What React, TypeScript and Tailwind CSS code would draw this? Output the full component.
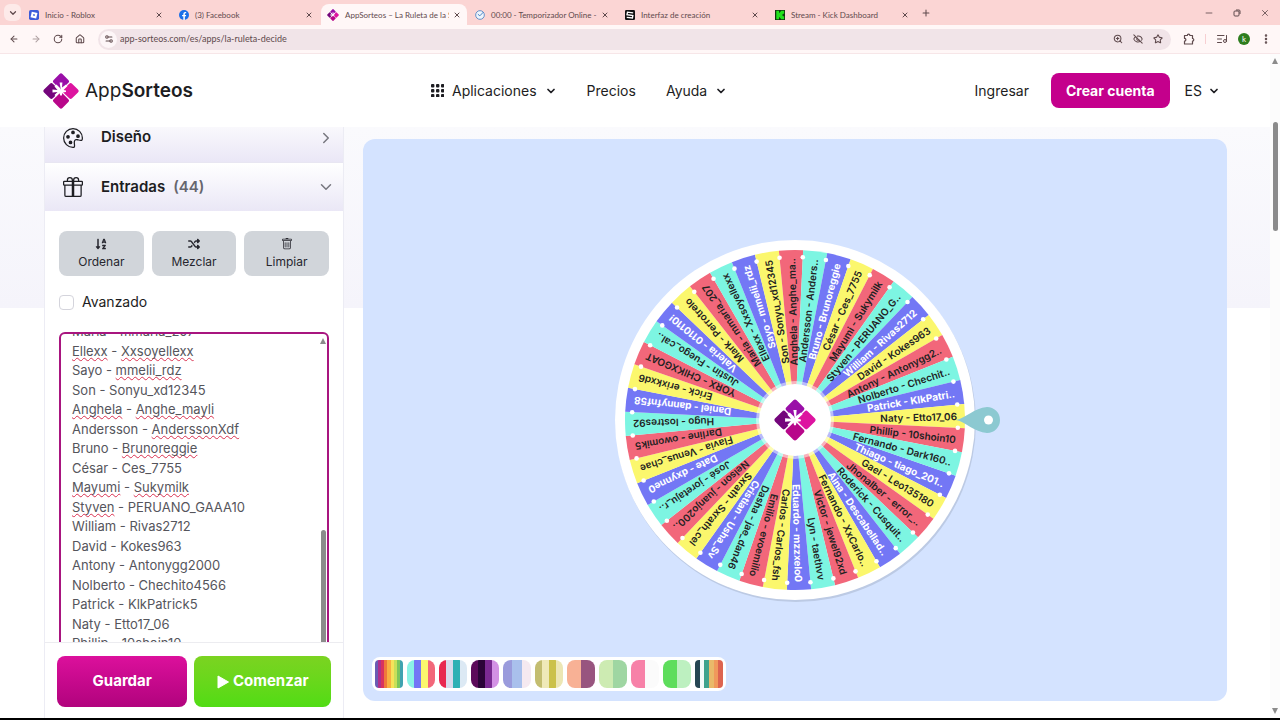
import { useEffect, useRef } from "react";
import {
  ArrowLeft,
  ArrowRight,
  ChevronDown,
  ChevronRight,
  EllipsisVertical,
  EyeOff,
  House,
  ListMusic,
  Minus,
  Plus,
  RotateCw,
  Settings2,
  Star,
  X,
  ZoomIn,
} from "lucide-react";
import { BsGift, BsPalette, BsTrash } from "react-icons/bs";
import { FaPlay, FaSortAlphaDown } from "react-icons/fa";
import { FaShuffle } from "react-icons/fa6";

const entries = [
  "Thiago - tiago_201..",
  "Gael - Leo135180",
  "Jhonalber - error_..",
  "Roderick - Cusquit..",
  "Aina - Descabellad..",
  "Fernando - XxCarlo..",
  "Victor - jewel92xd",
  "Lyn - taethvv",
  "Eduardo - mzzxelo0",
  "Carlos - Carlos_fsh",
  "Emilio - evoemilio",
  "Dasha - jae_dan46",
  "Cristian - Usha_Sv",
  "Sxrath - Sxrath_cel",
  "Nelson - juanjo200..",
  "José - joretaju_r..",
  "Date - dxynne0",
  "Flavia - Venus_chae",
  "Darline - owomik5",
  "Hugo - lostres92",
  "Daniel - dannyfnf58",
  "Erick - erixkxd6",
  "YORX - CHIKXGOAT",
  "Justin - Fuego_cal..",
  "Valeria - 0110110!",
  "Mark - Perrotrelo",
  "Maria - mmaria_207",
  "Ellexx - Xxsoyellexx",
  "Sayo - mmelii_rdz",
  "Son - Sonyu_xd12345",
  "Anghela - Anghe_mayli",
  "Andersson - AnderssonXdf",
  "Bruno - Brunoreggie",
  "César - Ces_7755",
  "Mayumi - Sukymilk",
  "Styven - PERUANO_GAAA10",
  "William - Rivas2712",
  "David - Kokes963",
  "Antony - Antonygg2000",
  "Nolberto - Chechito4566",
  "Patrick - KlkPatrick5",
  "Naty - Etto17_06",
  "Phillip - 10shoin10",
  "Fernando - Dark160..",
];

const misspelled = [
  "Ellexx",
  "Xxsoyellexx",
  "mmelii_rdz",
  "Anghela",
  "Anghe_mayli",
  "AnderssonXdf",
  "Brunoreggie",
  "Mayumi",
  "Sukymilk",
  "Styven",
];

const wheelColors = ["#7377f5", "#fbf76d", "#f2677a", "#7df5e2"];

const palettes = [
  ["#6a5cb4", "#b0308c", "#d8335f", "#f0783c", "#f8b042", "#f6e35a", "#c8e05a", "#7cc75c", "#3fa3b0"],
  ["#8af3e6", "#7377f5", "#fbf76d", "#f2677a"],
  ["#e8274f", "#d8d9ec", "#2eb0b4", "#dce9f4"],
  ["#5c0a5a", "#2b0438", "#7b2a93", "#d391e4"],
  ["#9a9bdc", "#a9c0ec", "#f5e9f0"],
  ["#c3bd70", "#efe9b8", "#cbc14a", "#ece6b4"],
  ["#f8b195", "#98557f"],
  ["#cdebb2", "#9fd6a2"],
  ["#f781a8", "#fbfbfb"],
  ["#5edd5c", "#bdf0c0"],
  ["#264653", "#f4fbfa", "#3fa38d", "#e9b96a", "#f0995c", "#dd6450"],
];

function Logo({ className }: { className?: string }) {
  return (
    <svg viewBox="0 0 36 36" className={className} aria-hidden="true">
      <g transform="rotate(45 18 18)">
        <rect x="5" y="5" width="12.4" height="12.4" rx="2" fill="#9a0fa8" />
        <rect x="18.600" y="5" width="12.4" height="12.4" rx="2" fill="#dd14a0" />
        <rect x="18.600" y="18.600" width="12.4" height="12.4" rx="2" fill="#b8078a" />
        <rect x="5" y="18.600" width="12.4" height="12.4" rx="2" fill="#74067c" />
      </g>
      <path
        d="M18 18L16.600 9.500H19.400L19 14.500L23 11.500L24.500 13L20.500 17L23 17.500V19L19.500 19.500L18.800 22.500H17.200L16.500 20L13 23.500L11.500 22L14.500 19L9.500 19.400V16.600L14.500 17L11.500 13.500L13.500 11.500L17 15Z"
        fill="#fff"
      />
    </svg>
  );
}

function RobloxIcon() {
  return (
    <svg viewBox="0 0 12 12" className="size-2.5 shrink-0">
      <rect width="12" height="12" rx="2" fill="#3b5bd9" />
      <path d="M3.4 2l6.8 1.6-1.6 6.6-6.8-1.6z" fill="#fff" />
      <path d="M5.3 4.8l1.9.5-.5 1.9-1.9-.5z" fill="#3b5bd9" />
    </svg>
  );
}

function FacebookIcon() {
  return (
    <svg viewBox="0 0 12 12" className="size-2.5 shrink-0">
      <circle cx="6" cy="6" r="6" fill="#1a6fe8" />
      <path d="M5.2 12V7.6H3.7V5.9h1.5V4.7c0-1.6.9-2.4 2.3-2.4l1.1.1v1.5h-.7c-.7 0-.9.4-.9.9v1.1h1.6l-.3 1.7H7V12z" fill="#fff" />
    </svg>
  );
}

function TimerIcon() {
  return (
    <svg viewBox="0 0 12 12" className="size-2.5 shrink-0" fill="none" stroke="#4a82c4">
      <circle cx="6" cy="6" r="5.2" fill="#eef5fc" />
      <path d="M3.4 5l2.4 2L10 2.6" strokeWidth="1.2" />
    </svg>
  );
}

function CreateIcon() {
  return (
    <svg viewBox="0 0 12 12" className="size-2.5 shrink-0">
      <rect width="12" height="12" rx="1.5" fill="#111" />
      <path d="M9.8 3.4L3 2.6l-.6 3 7 1-.5 3-6.8-.8" fill="none" stroke="#fff" strokeWidth="1.6" />
    </svg>
  );
}

function KickIcon() {
  return (
    <svg viewBox="0 0 12 12" className="size-2.5 shrink-0">
      <rect width="12" height="12" fill="#12330f" />
      <path d="M1.500 1v10h3.300V8.600h1v1.200H7V11h4V7.600H9.800V6.500H8.600v-1h1.200V4.400H11V1H7v1.200H5.800v1.200h-1V1z" fill="#22e01c" />
    </svg>
  );
}

function ExtensionIcon() {
  return (
    <svg viewBox="0 0 12 12" className="size-3" fill="none" stroke="currentColor" strokeWidth="1.2">
      <path d="M1.500 2.500h2.800a1.300 1.300 0 0 1 2.600 0h2.600v3a1.300 1.300 0 0 1 0 2.600v2.900h-8V8.200a1.400 1.400 0 0 0 0-2.800z" strokeLinejoin="round" />
    </svg>
  );
}

const tabs = [
  { title: "Inicio - Roblox", icon: <RobloxIcon /> },
  { title: "(3) Facebook", icon: <FacebookIcon /> },
  { title: "AppSorteos – La Ruleta de la Su", icon: <Logo className="size-3 shrink-0" />, active: true },
  { title: "00:00 - Temporizador Online - R", icon: <TimerIcon /> },
  { title: "Interfaz de creación", icon: <CreateIcon /> },
  { title: "Stream - Kick Dashboard", icon: <KickIcon /> },
];

function BrowserChrome() {
  return (
    <div className="shrink-0 font-['Lato',sans-serif] text-[#5f4a4d]">
      <div className="flex h-[25px] items-end bg-[#fbd5d4]">
        <button aria-label="Buscar pestañas" className="mb-1 ml-1 grid h-[17px] w-[17px] place-items-center rounded-md bg-[#fdeae9]">
          <ChevronDown className="size-2.5" strokeWidth={3} />
        </button>
        <div className="flex w-[896px] min-w-0">
          {tabs.map((tab) => (
            <div
              key={tab.title}
              className={
                tab.active
                  ? "flex h-[21px] min-w-0 flex-1 items-center gap-1 rounded-t-lg bg-[#fff7f7] px-1.5"
                  : "flex h-[21px] min-w-0 flex-1 items-center gap-1 px-2"
              }
            >
              {tab.icon}
              <span className="min-w-0 flex-1 overflow-hidden pl-0.5 text-[8px] whitespace-nowrap">{tab.title}</span>
              <button aria-label={`Cerrar ${tab.title}`}>
                <X className="size-2" strokeWidth={3} />
              </button>
            </div>
          ))}
        </div>
        <button aria-label="Nueva pestaña" className="mb-[7px] ml-1">
          <Plus className="block size-2.5" strokeWidth={2.5} />
        </button>
        <div className="mr-2.5 mb-[7px] ml-auto flex items-center gap-[18px]">
          <button aria-label="Minimizar"><Minus className="block size-2.5" /></button>
          <button aria-label="Restaurar">
            <svg viewBox="0 0 10 10" className="block size-2.5" fill="none" stroke="currentColor">
              <rect x="2" y="3" width="5" height="5" rx="1" />
              <path d="M4 2h3a1 1 0 011 1v3" />
            </svg>
          </button>
          <button aria-label="Cerrar"><X className="block size-2.5" /></button>
        </div>
      </div>
      <div className="flex h-[29px] items-center border-b border-[#f7e6e8] bg-[#fff7f7] px-2">
        <div className="flex items-center gap-3 px-px">
          <button aria-label="Atrás"><ArrowLeft className="block size-2.5" strokeWidth={2.5} /></button>
          <button aria-label="Adelante" className="opacity-50"><ArrowRight className="block size-2.5" strokeWidth={2.5} /></button>
          <button aria-label="Recargar"><RotateCw className="block size-2.5" strokeWidth={2.5} /></button>
          <button aria-label="Inicio"><House className="block size-2.5" strokeWidth={2.5} /></button>
        </div>
        <div className="ml-3 flex h-[21px] flex-1 items-center rounded-full bg-[#f1e4e8] pr-2 pl-0.5">
          <span className="grid size-[17px] place-items-center rounded-full bg-[#fdf6f8]">
            <Settings2 className="size-2.5" strokeWidth={2.5} />
          </span>
          <input
            aria-label="Dirección"
            defaultValue="app-sorteos.com/es/apps/la-ruleta-decide"
            className="min-w-0 flex-1 bg-transparent pl-[3px] text-[9px] outline-none"
          />
          <div className="flex items-center gap-2.5">
            <ZoomIn className="size-2.5" strokeWidth={2.5} />
            <EyeOff className="size-2.5" strokeWidth={2.5} />
            <Star className="size-2.5" strokeWidth={2.5} />
          </div>
        </div>
        <div className="ml-3 flex items-center">
          <ExtensionIcon />
          <span className="mx-2.5 h-2.5 w-px bg-[#f7cfd2]" />
          <ListMusic className="size-3" />
          <span className="ml-2.5 grid size-3 place-items-center rounded-full bg-[#2e7d1e] text-[8px] leading-none text-white">k</span>
          <EllipsisVertical className="ml-2.5 size-3" strokeWidth={3} />
        </div>
      </div>
    </div>
  );
}

function SiteHeader() {
  return (
    <header className="flex h-[73px] shrink-0 items-center bg-white pr-[50px] pl-[43px] text-sm text-[#1d1d22]">
      <a href="#" className="flex items-center gap-1.5 text-[19px]">
        <Logo className="size-9" />
        <span>
          App<span className="font-semibold">Sorteos</span>
        </span>
      </a>
      <nav className="ml-[238px] flex items-center gap-[30px]">
        <a href="#" className="flex items-center gap-2">
          <svg viewBox="0 0 13 13" className="size-[13px]" fill="currentColor">
            {[0, 5, 10].map((y) => [0, 5, 10].map((x) => <rect key={`${x}-${y}`} x={x} y={y} width="3.4" height="3.4" rx="1" />))}
          </svg>
          Aplicaciones
          <ChevronDown className="size-3" strokeWidth={3.5} />
        </a>
        <a href="#">Precios</a>
        <a href="#" className="flex items-center gap-2">
          Ayuda
          <ChevronDown className="size-3" strokeWidth={3.5} />
        </a>
      </nav>
      <div className="ml-auto flex items-center">
        <a href="#">Ingresar</a>
        <button className="ml-[22px] h-[35px] rounded-lg bg-[#c4008c] px-[15px] font-bold text-white">Crear cuenta</button>
        <button className="ml-[15px] flex items-center gap-1.5">
          ES
          <ChevronDown className="size-3" strokeWidth={3.5} />
        </button>
      </div>
    </header>
  );
}

function EntriesBox() {
  const ref = useRef<HTMLTextAreaElement>(null);
  const backdrop = useRef<HTMLDivElement>(null);

  const sync = () => {
    if (ref.current && backdrop.current) backdrop.current.scrollTop = ref.current.scrollTop;
  };

  useEffect(() => {
    if (ref.current) ref.current.scrollTop = 523;
    sync();
  }, []);

  return (
    <div className="relative h-[340px] shrink-0 overflow-hidden rounded-md border-2 border-[#a8157f] bg-white text-[13px] leading-[1.5]">
      <div ref={backdrop} aria-hidden="true" className="absolute inset-0 overflow-hidden px-[11px] py-1 whitespace-pre text-transparent select-none">
        {entries.map((entry) => (
          <div key={entry}>
            {entry.split(" - ").map((word, i) => (
              <span key={i}>
                {i > 0 ? " - " : null}
                <span className={misspelled.includes(word) ? "underline decoration-[#d9304f] decoration-wavy decoration-1 [text-decoration-skip-ink:none]" : ""}>
                  {word}
                </span>
              </span>
            ))}
          </div>
        ))}
      </div>
      <textarea
        ref={ref}
        id="entries"
        aria-label="Entradas"
        spellCheck={false}
        onScroll={sync}
        defaultValue={entries.join("\n")}
        className="relative block h-full w-full resize-none bg-transparent px-[11px] py-1 whitespace-pre text-[#55555c] outline-none [scrollbar-width:none]"
      />
      <div className="pointer-events-none absolute top-1 right-px bottom-1 flex w-1.5 flex-col items-center">
        <span className="h-1.5 w-1.5 bg-[#8b8b8b] [clip-path:polygon(50%_0,100%_100%,0_100%)]" />
        <span className="mt-auto h-[136px] w-[5px] rounded-full bg-[#8b8b8b]" />
      </div>
    </div>
  );
}

const toolButton =
  "flex h-[45px] flex-col items-center justify-center gap-1 rounded-lg bg-[#d1d5da] text-xs leading-4 text-[#26262e]";

const panelHeader =
  "flex h-[49px] shrink-0 items-center bg-linear-to-b from-white to-[#eae7f6] pr-2 pl-[18px] text-[15px] font-semibold";

function Sidebar() {
  return (
    <aside className="flex w-[300px] shrink-0 flex-col border-x border-[#ececf4] bg-white text-[#1d1d22]">
      <div className="flex h-[35px] shrink-0 flex-col justify-end overflow-hidden">
        <button className={panelHeader}>
          <BsPalette className="size-5" />
          <span className="ml-[18px]">Diseño</span>
          <ChevronRight className="ml-auto size-[18px] text-[#77777f]" />
        </button>
      </div>
      <button className={`${panelHeader} border-t border-[#e8e6f2]`}>
        <BsGift className="size-5" />
        <span className="ml-[18px]">Entradas</span>
        <span className="ml-2 text-[#66666e]">(44)</span>
        <ChevronDown className="ml-auto size-[18px] text-[#77777f]" />
      </button>
      <div className="flex min-h-0 flex-1 flex-col overflow-hidden px-3.5 pt-5">
        <div className="grid shrink-0 grid-cols-3 gap-2">
          <button className={toolButton}>
            <FaSortAlphaDown className="size-3" />
            Ordenar
          </button>
          <button className={toolButton}>
            <FaShuffle className="size-3" />
            Mezclar
          </button>
          <button className={toolButton}>
            <BsTrash className="size-3" />
            Limpiar
          </button>
        </div>
        <label className="my-4 flex shrink-0 items-center gap-2 text-sm">
          <input type="checkbox" className="size-[15px] appearance-none rounded-sm border border-[#d4d4dc] bg-white" />
          Avanzado
        </label>
        <div className="mt-1">
          <EntriesBox />
        </div>
      </div>
      <div className="flex shrink-0 gap-[7px] border-t border-[#ececf0] bg-white px-3 pt-[13px] pb-[11px]">
        <button className="h-[51px] flex-[130] rounded-lg bg-linear-to-b from-[#dc109c] to-[#b1037d] text-[15px] font-bold text-white">
          Guardar
        </button>
        <button className="flex h-[51px] flex-[136] items-center justify-center gap-1 rounded-lg bg-linear-to-b from-[#7bd321] to-[#50dc14] text-[15px] font-bold text-white">
          <svg viewBox="0 0 12 14" className="h-3.5 w-3" fill="currentColor" aria-hidden="true">
            <path d="M1 1L11.500 7L1 13Z" stroke="currentColor" strokeLinejoin="round" />
          </svg>
          Comenzar
        </button>
      </div>
    </aside>
  );
}

const STEP = 360 / entries.length;
const FIRST_ANGLE = 23.2;

function point(radius: number, degrees: number) {
  const rad = (degrees * Math.PI) / 180;
  return [radius * Math.cos(rad), radius * Math.sin(rad)];
}

function slicePath(degrees: number) {
  const [x1, y1] = point(170, degrees - STEP / 2);
  const [x2, y2] = point(170, degrees + STEP / 2);
  return `M0 0L${x1} ${y1}A170 170 0 0 1 ${x2} ${y2}Z`;
}

function sliceLabel(entry: string) {
  return entry.length > 20 ? `${entry.slice(0, 18)}..` : entry;
}

function Wheel() {
  return (
    <svg viewBox="-200 -190 420 380" className="h-[380px] w-[420px] shrink-0 font-['Inter',sans-serif]">
      <circle cx="1" cy="2" r="180" fill="#bccae4" />
      <circle r="180" fill="#fff" />
      {entries.map((entry, i) => (
        <path key={entry} d={slicePath(FIRST_ANGLE + i * STEP)} fill={wheelColors[i % 4]} />
      ))}
      <circle r="39" fill="#fff" opacity="0.5" />
      {entries.map((entry, i) => {
        const angle = FIRST_ANGLE + i * STEP;
        const [x, y] = point(163, angle + STEP / 2);
        return (
          <g key={entry}>
            <text
              x="162"
              y="4"
              textAnchor="end"
              transform={`rotate(${angle})`}
              fontSize="10"
              fontWeight={i % 4 === 0 ? 700 : 600}
              fill={i % 4 === 0 ? "#fff" : "#222"}
            >
              {sliceLabel(entry)}
            </text>
            <circle cx={x} cy={y} r="2.3" fill="#fff" />
          </g>
        );
      })}
      <circle r="36" fill="#fff" />
      <svg x="-21" y="-21" width="42" height="42">
        <Logo />
      </svg>
      <path d="M161 0C171-2 179-12 192-13A13 13 0 1 1 192 13C179 12 171 2 161 0Z" fill="#8cc9d1" />
      <circle cx="193.500" cy="0" r="4.500" fill="#fff" />
    </svg>
  );
}

function PaletteBar() {
  return (
    <div className="flex gap-1 rounded-lg bg-white p-[3px]">
      {palettes.map((colors, i) => (
        <button
          key={i}
          aria-label={`Paleta ${i + 1}`}
          className={colors.length > 4 ? "flex size-7 overflow-hidden rounded-sm" : "flex size-7 overflow-hidden rounded-lg"}
        >
          {colors.map((color) => (
            <span key={color} className="h-full flex-1" style={{ backgroundColor: color }} />
          ))}
        </button>
      ))}
    </div>
  );
}

export default function App() {
  return (
    <div className="flex h-screen flex-col overflow-hidden border-b-2 border-black bg-white font-['Inter',sans-serif]">
      <BrowserChrome />
      <div className="flex min-h-0 flex-1">
        <div className="flex min-w-0 flex-1 flex-col">
          <SiteHeader />
          <main className="flex min-h-0 flex-1 gap-[19px] bg-[linear-gradient(#fafafd,#f5f4fb_181px,#fff_181px)] pr-[43px] pl-11">
            <Sidebar />
            <section className="mt-3 mb-[17px] flex min-w-0 flex-1 flex-col rounded-xl bg-[#d4e3ff] px-[9px] pb-2.5">
              <div className="flex flex-1 items-center justify-center pt-11 pl-5">
                <Wheel />
              </div>
              <div className="flex">
                <PaletteBar />
              </div>
            </section>
          </main>
        </div>
        <div className="flex w-2.5 shrink-0 flex-col items-center bg-[#fcfcfc] py-1">
          <span className="h-1.5 w-1.5 bg-[#8b8b8b] [clip-path:polygon(50%_0,100%_100%,0_100%)]" />
          <span className="mt-[58px] h-[109px] w-[5px] rounded-full bg-[#8b8b8b]" />
          <span className="mt-auto h-1.5 w-1.5 bg-[#8b8b8b] [clip-path:polygon(0_0,100%_0,50%_100%)]" />
        </div>
      </div>
    </div>
  );
}
